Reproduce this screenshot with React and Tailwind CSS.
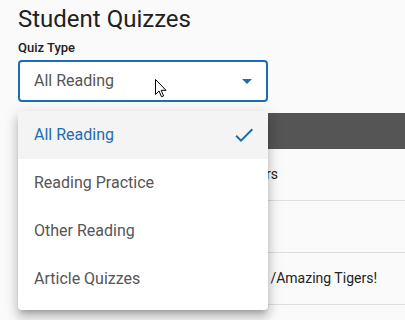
import React from "react";

export default function App() {
  const items = ["All Reading", "Reading Practice", "Other Reading", "Article Quizzes"];
  return (
    <div
      className="relative min-h-[320px] w-full overflow-hidden bg-[#fafafa]"
      style={{ fontFamily: "Roboto, 'Liberation Sans', sans-serif" }}
    >
      <div className="pl-[18px] pt-[5px]">
        <h1 className="text-[24px] leading-[28px] text-[#212121]">Student Quizzes</h1>
        <div className="mt-[7px] text-[13px] font-medium leading-[16px] text-[#212121]">Quiz Type</div>
        <div className="mt-[4px] flex h-[42px] w-[250px] items-center justify-between rounded-[4px] border-2 border-[#1c6db3] bg-white pl-[14px] pr-[14px]">
          <span className="text-[16px] text-[#555]">All Reading</span>
          <svg width="10" height="5" viewBox="0 0 10 5">
            <polygon points="0,0 10,0 5,5" fill="#1c6db3" />
          </svg>
        </div>
      </div>

      <div className="ml-[18px] mt-[11px]">
        <div className="h-[36px] bg-[#555555]" />
        <div className="flex h-[52px] items-center border-b border-[#dedede]">
          <div className="w-[260px] text-right text-[14px] text-[#222]">Amazing Tigers</div>
        </div>
        <div className="flex h-[52px] items-center border-b border-[#dedede]" />
        <div className="flex h-[52px] items-center border-b border-[#dedede]">
          <div className="w-[359px] text-right text-[14px] text-[#222]">Article Quiz  /Amazing Tigers!</div>
        </div>
      </div>

      <div className="absolute left-[18px] top-[111px] w-[250px] rounded-[4px] bg-white pb-[7px] shadow-[0px_5px_5px_-3px_rgba(0,0,0,0.2),0px_8px_10px_1px_rgba(0,0,0,0.14),0px_3px_14px_2px_rgba(0,0,0,0.12)]">
        {items.map((t, i) => (
          <div
            key={t}
            className={
              i === 0
                ? "flex h-[48px] items-center justify-between bg-[#f4f4f4] pl-[16px] pr-[12px] text-[16px] text-[#1c6db3]"
                : "flex h-[48px] items-center justify-between pl-[16px] pr-[12px] text-[16px] text-[#555]"
            }
          >
            <span>{t}</span>
            {i === 0 && (
              <svg width="24" height="24" viewBox="0 0 24 24">
                <path d="M9 16.17 4.83 12l-1.42 1.41L9 19 21 7l-1.41-1.41z" fill="#1c6db3" />
              </svg>
            )}
          </div>
        ))}
      </div>

      <svg className="absolute left-[155px] top-[79px]" width="13" height="19" viewBox="0 0 13 19">
        <path
          d="M0.5 0.5 L0.5 15.5 L4 12 L6.5 17.8 L8.6 16.9 L6.2 11.3 L11 11.3 Z"
          fill="#fff"
          stroke="#000"
          strokeWidth="1"
          strokeLinejoin="miter"
        />
      </svg>
    </div>
  );
}
